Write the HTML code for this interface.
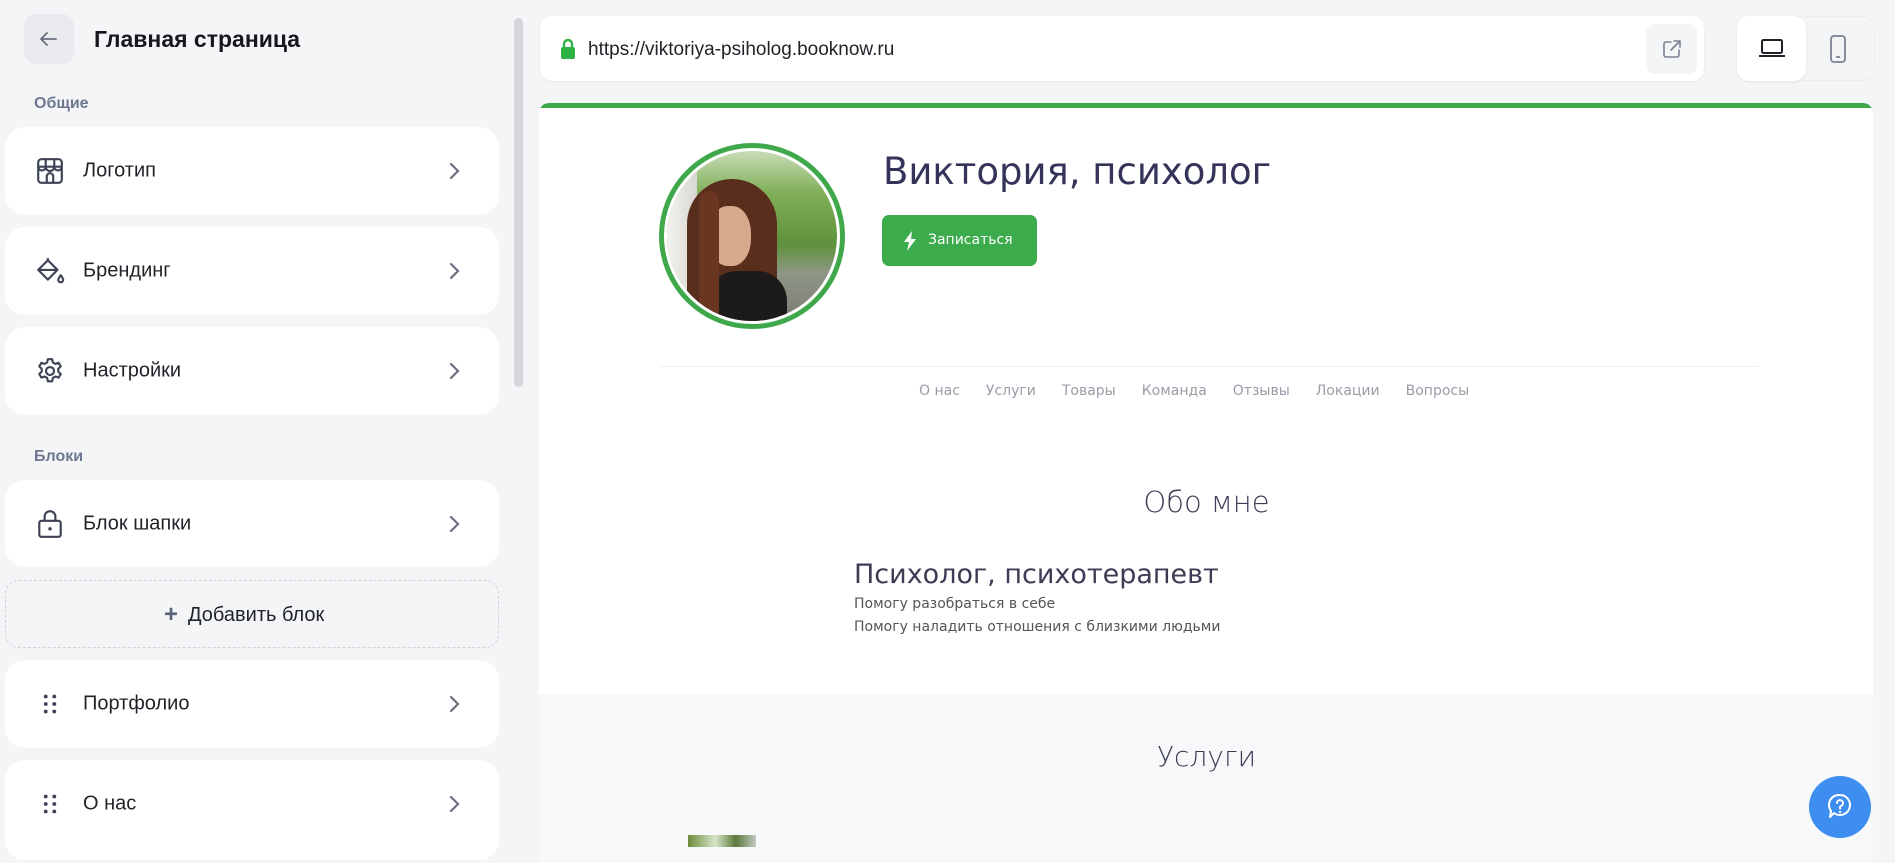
<!DOCTYPE html>
<html><head><meta charset="utf-8"><style>
*{box-sizing:border-box;margin:0;padding:0}
body{width:1895px;height:846px;overflow:hidden;background:#f4f5f7;font-family:"Liberation Sans","DejaVu Sans",sans-serif;position:relative;color:#1f2328}
.abs{position:absolute}
.card{position:absolute;left:5px;width:494px;background:#fff;border-radius:20px}
.card .t{position:absolute;left:78px;top:50%;transform:translateY(-50%);font-size:20px;color:#1f2328}
.card .ic{position:absolute;left:30px;top:50%;transform:translateY(-50%);width:30px;height:30px}
.card .ch{position:absolute;left:441px;top:50%;transform:translateY(-50%);width:16px;height:20px}
.sec{position:absolute;left:34px;font-size:16px;font-weight:bold;color:#6b7790}
.nav span{margin:0 13px}
</style></head><body>
<div class="abs" style="left:24px;top:14px;width:50px;height:50px;background:#e9ebef;border-radius:12px"></div>
<svg class="abs" style="left:36px;top:28px" width="24" height="22" viewBox="0 0 24 22"><path d="M20 11H5M11 5l-6 6 6 6" stroke="#6b7080" stroke-width="1.8" fill="none" stroke-linecap="round" stroke-linejoin="round"/></svg>
<div class="abs" style="left:94px;top:26px;font-size:23px;font-weight:bold;color:#16181d">Главная страница</div>
<div class="sec" style="top:95px">Общие</div>
<div class="card" style="top:127px;height:88px">
<svg class="ic" viewBox="0 0 28 28"><g fill="none" stroke="#3d4355" stroke-width="2" stroke-linejoin="round"><rect x="3" y="3" width="22" height="22" rx="3"/><path d="M3 10h22M10 3v7M18 3v7M3 10a3.5 3.5 0 0 0 7 0a4 4 0 0 0 8 0a3.5 3.5 0 0 0 7 0M11 25v-6a3 3 0 0 1 6 0v6"/></g></svg>
<div class="t">Логотип</div>
<svg class="ch" viewBox="0 0 16 20"><path d="M5 3l7 7-7 7" stroke="#6b7080" stroke-width="2.2" fill="none" stroke-linecap="round"/></svg></div>
<div class="card" style="top:227px;height:88px">
<svg class="ic" viewBox="0 0 28 28"><g fill="none" stroke="#3d4355" stroke-width="2" stroke-linejoin="round"><path d="M12 4L3 13l9 9 9-9z M3 13h18"/><path d="M12 4V2"/><path d="M24 18c-1.5 2-2.3 3.3-2.3 4.3a2.3 2.3 0 0 0 4.6 0c0-1-.8-2.3-2.3-4.3z"/></g></svg>
<div class="t">Брендинг</div>
<svg class="ch" viewBox="0 0 16 20"><path d="M5 3l7 7-7 7" stroke="#6b7080" stroke-width="2.2" fill="none" stroke-linecap="round"/></svg></div>
<div class="card" style="top:327px;height:88px">
<svg class="ic" viewBox="0 0 24 24"><g fill="none" stroke="#3d4355" stroke-width="1.7" stroke-linejoin="round"><path d="M10.3 2.5h3.4l.6 2.7 2 1.1 2.6-.9 1.7 2.9-2 1.9v2.3l2 1.9-1.7 2.9-2.6-.9-2 1.1-.6 2.7h-3.4l-.6-2.7-2-1.1-2.6.9-1.7-2.9 2-1.9v-2.3l-2-1.9 1.7-2.9 2.6.9 2-1.1z"/><circle cx="12" cy="12" r="3.2"/></g></svg>
<div class="t">Настройки</div>
<svg class="ch" viewBox="0 0 16 20"><path d="M5 3l7 7-7 7" stroke="#6b7080" stroke-width="2.2" fill="none" stroke-linecap="round"/></svg></div>
<div class="sec" style="top:448px">Блоки</div>
<div class="card" style="top:480px;height:87px">
<svg class="ic" viewBox="0 0 28 28"><g fill="none" stroke="#3d4355" stroke-width="2" stroke-linejoin="round"><rect x="4" y="11" width="20" height="15" rx="2"/><path d="M9 11V7a5 5 0 0 1 10 0v4"/></g><circle cx="14" cy="18.5" r="1.6" fill="#3d4355"/></svg>
<div class="t">Блок шапки</div>
<svg class="ch" viewBox="0 0 16 20"><path d="M5 3l7 7-7 7" stroke="#6b7080" stroke-width="2.2" fill="none" stroke-linecap="round"/></svg></div>
<div class="abs" style="left:5px;top:580px;width:494px;height:68px;border:1.5px dashed #cfd3da;border-radius:14px"></div>
<div class="abs" style="left:164px;top:600px;font-size:20px;color:#1f2328"><span style="color:#5a6478;font-size:24px;font-weight:bold;margin-right:10px;position:relative;top:1px">+</span>Добавить блок</div>
<div class="card" style="top:660px;height:88px">
<svg class="ic" viewBox="0 0 28 28"><g fill="#3d4355"><circle cx="10" cy="7" r="1.8"/><circle cx="18" cy="7" r="1.8"/><circle cx="10" cy="14" r="1.8"/><circle cx="18" cy="14" r="1.8"/><circle cx="10" cy="21" r="1.8"/><circle cx="18" cy="21" r="1.8"/></g></svg>
<div class="t">Портфолио</div>
<svg class="ch" viewBox="0 0 16 20"><path d="M5 3l7 7-7 7" stroke="#6b7080" stroke-width="2.2" fill="none" stroke-linecap="round"/></svg></div>
<div class="card" style="top:760px;height:100px">
<svg class="ic" style="top:44px" viewBox="0 0 28 28"><g fill="#3d4355"><circle cx="10" cy="7" r="1.8"/><circle cx="18" cy="7" r="1.8"/><circle cx="10" cy="14" r="1.8"/><circle cx="18" cy="14" r="1.8"/><circle cx="10" cy="21" r="1.8"/><circle cx="18" cy="21" r="1.8"/></g></svg>
<div class="t" style="top:44px">О нас</div>
<svg class="ch" style="top:44px" viewBox="0 0 16 20"><path d="M5 3l7 7-7 7" stroke="#6b7080" stroke-width="2.2" fill="none" stroke-linecap="round"/></svg></div>
<div class="abs" style="left:514px;top:18px;width:9px;height:369px;background:#d4d6db;border-radius:5px"></div>
<div class="abs" style="left:540px;top:16px;width:1164px;height:65px;background:#fff;border-radius:12px;box-shadow:0 1px 2px rgba(0,0,0,.06)"></div>
<svg class="abs" style="left:560px;top:38px" width="16" height="22" viewBox="0 0 16 22"><path d="M4 9V6a4 4 0 0 1 8 0v3" stroke="#2fb344" stroke-width="2.4" fill="none"/><rect x="1" y="9" width="14" height="12" rx="2" fill="#2fb344"/></svg>
<div class="abs" style="left:588px;top:39px;font-size:19px;color:#1f2328">https://viktoriya-psiholog.booknow.ru</div>
<div class="abs" style="left:1646px;top:24px;width:51px;height:50px;background:#f4f5f7;border-radius:8px"></div>
<svg class="abs" style="left:1661px;top:38px" width="22" height="22" viewBox="0 0 22 22"><g fill="none" stroke="#7b8294" stroke-width="1.6" stroke-linecap="round" stroke-linejoin="round"><path d="M10 4H5a2 2 0 0 0-2 2v11a2 2 0 0 0 2 2h11a2 2 0 0 0 2-2v-5M13 3h6v6M19 3l-9 9"/></g></svg>
<div class="abs" style="left:1737px;top:16px;width:138px;height:65px;background:#f4f5f7;border-radius:12px;border:1px solid #eceef1"></div>
<div class="abs" style="left:1737px;top:16px;width:69px;height:65px;background:#fff;border-radius:12px;box-shadow:0 1px 3px rgba(0,0,0,.08)"></div>
<svg class="abs" style="left:1758px;top:38px" width="28" height="20" viewBox="0 0 28 20"><rect x="4" y="2" width="20" height="13" rx="1.5" fill="none" stroke="#1f2328" stroke-width="2"/><path d="M1 18h26" stroke="#1f2328" stroke-width="2"/></svg>
<svg class="abs" style="left:1828px;top:34px" width="20" height="30" viewBox="0 0 20 30"><rect x="3" y="2" width="14" height="26" rx="3" fill="none" stroke="#7b8294" stroke-width="1.8"/><path d="M8 23h4" stroke="#7b8294" stroke-width="1.8"/></svg>
<div class="abs" style="left:539px;top:103px;width:1334px;height:760px;background:#fff;border-radius:10px 10px 0 0;overflow:hidden">
 <div style="height:5px;background:#3fa84a"></div>
 <div class="abs" style="left:0;top:591px;width:100%;height:200px;background:#f7f8f9"></div>
</div>
<div class="abs" style="left:659px;top:143px;width:186px;height:186px;border:5px solid #3fa84a;border-radius:50%;background:#fff"></div>
<div class="abs" style="left:667px;top:151px;width:170px;height:170px;border-radius:50%;overflow:hidden;background:linear-gradient(180deg,#c9dcb8 0%,#7fae56 25%,#5f913c 55%,#8f9686 72%,#7c7c76 100%)">
 <div class="abs" style="left:0;top:0;width:30px;height:170px;background:linear-gradient(90deg,#f4f2ee,#d9d7d2)"></div>
 <div class="abs" style="left:20px;top:28px;width:90px;height:160px;border-radius:45px 45px 10px 10px;background:#5a2e1c"></div>
 <div class="abs" style="left:42px;top:55px;width:42px;height:60px;border-radius:45%;background:#d8a98c"></div>
 <div class="abs" style="left:40px;top:120px;width:80px;height:60px;border-radius:30px 30px 0 0;background:#1c1a1a"></div>
 <div class="abs" style="left:32px;top:40px;width:20px;height:130px;border-radius:10px;background:#6b3620"></div>
</div>
<div class="abs" style="left:883px;top:150px;font-size:37px;color:#34345a;font-family:'DejaVu Sans','Liberation Sans',sans-serif">Виктория, психолог</div>
<div class="abs" style="left:882px;top:215px;width:155px;height:51px;background:#3cab4b;border-radius:7px"></div>
<svg class="abs" style="left:903px;top:230px" width="14" height="22" viewBox="0 0 14 22"><path d="M9 1L1 12h5l-2 9 9-12H8z" fill="#fff"/></svg>
<div class="abs" style="left:928px;top:232px;font-size:14px;color:#fff;font-family:'DejaVu Sans',sans-serif">Записаться</div>
<div class="abs" style="left:659px;top:366px;width:1099px;height:1px;background:#eef0f2"></div>
<div class="abs nav" style="left:906px;top:383px;font-size:14px;color:#9a9ca8;font-family:'DejaVu Sans',sans-serif;white-space:nowrap"><span>О нас</span><span>Услуги</span><span>Товары</span><span>Команда</span><span>Отзывы</span><span>Локации</span><span>Вопросы</span></div>
<div class="abs" style="left:0;width:2413px;top:485px;text-align:center;font-size:29px;color:#3c3c55;font-family:'DejaVu Sans',sans-serif;font-weight:200">Обо мне</div>
<div class="abs" style="left:854px;top:559px;font-size:27px;color:#3c3c55;font-family:'DejaVu Sans',sans-serif">Психолог, психотерапевт</div>
<div class="abs" style="left:854px;top:593px;font-size:14px;color:#555;font-family:'DejaVu Sans',sans-serif;line-height:23px">Помогу разобраться в себе<br>Помогу наладить отношения с близкими людьми</div>
<div class="abs" style="left:0;width:2413px;top:740px;text-align:center;font-size:28px;color:#3c3c55;font-family:'DejaVu Sans',sans-serif;font-weight:200">Услуги</div>
<div class="abs" style="left:688px;top:835px;width:68px;height:12px;background:linear-gradient(90deg,#6b8a3a,#d8e6c8 40%,#5b7a3a 70%,#c0c8c0)"></div>
<div class="abs" style="left:1809px;top:776px;width:62px;height:62px;border-radius:50%;background:#3d8ef0"></div>
<svg class="abs" style="left:1826px;top:792px" width="28" height="30" viewBox="0 0 28 30"><path d="M14 3a10 10 0 1 1-6 18l-4 4 1-6A10 10 0 0 1 14 3z" fill="none" stroke="#fff" stroke-width="2" stroke-linejoin="round"/><path d="M11 11a3 3 0 1 1 4 3c-1 .5-1 1-1 2.5" stroke="#fff" stroke-width="2" fill="none" stroke-linecap="round"/><circle cx="14" cy="20" r="1.2" fill="#fff"/></svg>
</body></html>
